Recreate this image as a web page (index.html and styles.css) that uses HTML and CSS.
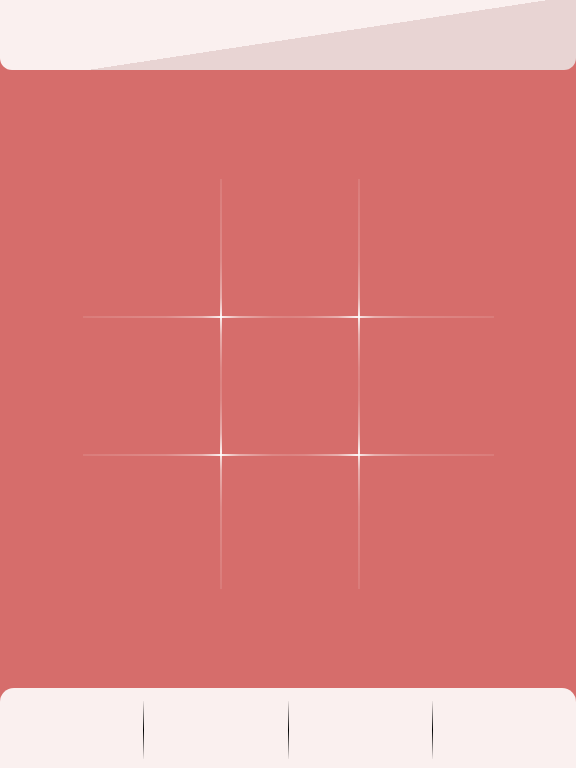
FILE: index.html
```html
<!DOCTYPE html>
<html lang="en">
<head>
  <meta charset="UTF-8">
  <title>Tic Tac Toe</title>
  <link rel="stylesheet" href="styles.css">
</head>
<body>

  <div class="app">
    <!-- Score / status bar -->
    <header class="topBar"></header>

    <main class="playArea">
      <div class="board" id="board">
        <button class="cell"></button>
        <button class="cell"></button>
        <button class="cell"></button>
        <button class="cell"></button>
        <button class="cell"></button>
        <button class="cell"></button>
        <button class="cell"></button>
        <button class="cell"></button>
        <button class="cell"></button>
      </div>
    </main>

    <!-- Bottom menu -->
    <nav class="bottomBar">
      <button class="menuBtn"></button>
      <span class="sep"></span>
      <button class="menuBtn"></button>
      <span class="sep"></span>
      <button class="menuBtn"></button>
      <span class="sep"></span>
      <button class="menuBtn"></button>
    </nav>
  </div>

</body>
</html>
```

FILE: styles.css
```css
body {
  font-family: "Liberation Sans", Arial, sans-serif;
  margin: 0;
  padding: 0;
  background-color: #d66d6b;
}

.app {
  display: flex;
  flex-direction: column;
  height: 100vh;
}

.topBar {
  height: 70px;
  flex-shrink: 0;
  border-radius: 0 0 12px 12px;
  background: linear-gradient(171.35deg, #faf0ef 82.4px, #e8d4d3 82.4px);
}

.playArea {
  flex: 1;
  display: flex;
  justify-content: center;
  align-items: flex-start;
  padding-top: 109px;
}

.board {
  width: 411px;
  height: 410px;
  display: grid;
  grid-template-columns: 137px 137px 137px;
  grid-template-rows: 137px 137px 136px;
  --line-v: linear-gradient(to bottom, rgba(255,255,255,0.1), rgba(255,255,255,0.2) 20%, rgba(255,255,255,0.45) 29%, rgba(255,255,255,0.9) 33.5%, rgba(255,255,255,0.45) 38%, rgba(255,255,255,0.18) 46%, rgba(255,255,255,0.15) 50%, rgba(255,255,255,0.18) 54%, rgba(255,255,255,0.45) 62%, rgba(255,255,255,0.9) 66.5%, rgba(255,255,255,0.45) 71%, rgba(255,255,255,0.2) 80%, rgba(255,255,255,0.1));
  --line-h: linear-gradient(to right, rgba(255,255,255,0.1), rgba(255,255,255,0.2) 20%, rgba(255,255,255,0.45) 29%, rgba(255,255,255,0.9) 33.5%, rgba(255,255,255,0.45) 38%, rgba(255,255,255,0.18) 46%, rgba(255,255,255,0.15) 50%, rgba(255,255,255,0.18) 54%, rgba(255,255,255,0.45) 62%, rgba(255,255,255,0.9) 66.5%, rgba(255,255,255,0.45) 71%, rgba(255,255,255,0.2) 80%, rgba(255,255,255,0.1));
  background:
    var(--line-v) 137px 0 / 2px 100% no-repeat,
    var(--line-v) 275px 0 / 2px 100% no-repeat,
    var(--line-h) 0 137px / 100% 2px no-repeat,
    var(--line-h) 0 275px / 100% 2px no-repeat;
}

.cell {
  background: transparent;
  border: none;
  padding: 0;
  cursor: pointer;
}

.bottomBar {
  height: 80px;
  flex-shrink: 0;
  display: flex;
  background-color: #faf0ef;
  border-radius: 14px 14px 0 0;
}

.menuBtn {
  flex: 1;
  background: transparent;
  border: none;
  padding: 0;
  cursor: pointer;
}

.sep {
  width: 1px;
  height: 58px;
  margin-top: 13px;
  background: linear-gradient(to bottom, rgba(0,0,0,0.05), #000 50%, rgba(0,0,0,0.05));
}
```
